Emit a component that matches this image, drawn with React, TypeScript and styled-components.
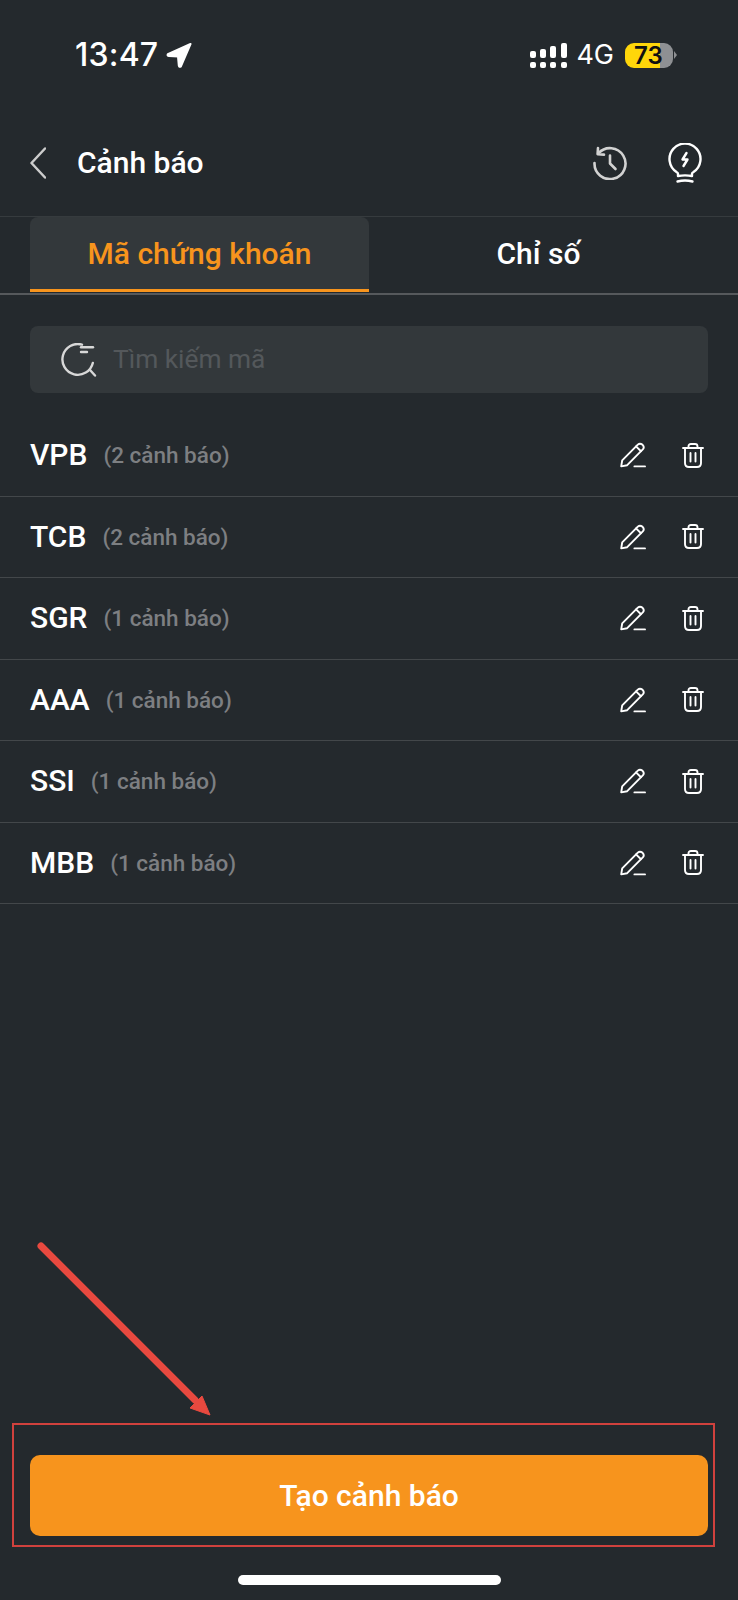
import React from "react";
import styled, { createGlobalStyle } from "styled-components";

const Global = createGlobalStyle`
  html, body { margin: 0; padding: 0; background: #24292d; }
  * { box-sizing: border-box; }
`;

const Page = styled.div`
  position: relative;
  width: 738px;
  height: 1600px;
  overflow: hidden;
  display: flex;
  flex-direction: column;
  background: #24292d;
  color: #fff;
  font-family: Roboto, "Liberation Sans", sans-serif;
`;

const StatusBar = styled.div`
  height: 110px;
  flex: none;
  display: flex;
  align-items: center;
  justify-content: space-between;
  padding: 0 61px 0 75px;
`;
const StatusGroup = styled.div<{ $gap: number }>`
  display: flex;
  align-items: center;
  gap: ${(p) => p.$gap}px;
`;
const Clock = styled.span`
  font-family: Inter, sans-serif;
  font-size: 32px;
  font-weight: 500;
  letter-spacing: 0.2px;
  line-height: 36px;
`;
const Network = styled.span`
  margin: 0 -1px 0 -3px;
  font-family: Inter, sans-serif;
  font-size: 27px;
  font-weight: 400;
  line-height: 32px;
`;
const Battery = styled.div`
  width: 48px;
  height: 25px;
  border-radius: 9px;
  background: linear-gradient(90deg, #ffd60a 0 73%, #8e9093 73% 100%);
  color: #111;
  font-family: Inter, sans-serif;
  font-size: 24px;
  font-weight: 600;
  line-height: 25px;
  padding-left: 9px;
`;
const BatteryCap = styled.div`
  width: 0;
  height: 0;
  margin-left: -11px;
  border-left: 3px solid #8e9093;
  border-top: 4px solid transparent;
  border-bottom: 4px solid transparent;
`;

const Header = styled.header`
  height: 106px;
  flex: none;
  display: flex;
  align-items: center;
  padding: 0 36px 0 30px;
`;
const Title = styled.h1`
  margin: 0 0 0 31px;
  flex: 1;
  font-size: 30px;
  font-weight: 500;
  line-height: 36px;
`;
const HeaderIcons = styled.div`
  display: flex;
  align-items: center;
  gap: 41px;
`;

const Tabs = styled.nav`
  flex: none;
  height: 79px;
  padding: 0 30px;
  display: grid;
  grid-template-columns: 339px 339px;
  border-top: 1px solid #363b3e;
  border-bottom: 2px solid #56595c;
`;
const Tab = styled.div<{ $active?: boolean }>`
  display: flex;
  align-items: center;
  justify-content: center;
  height: 75px;
  padding-bottom: 2px;
  border-radius: 8px 8px 0 0;
  font-size: 30px;
  font-weight: 500;
  background: ${(p) => (p.$active ? "#33383b" : "transparent")};
  color: ${(p) => (p.$active ? "#f7941d" : "#fff")};
  box-shadow: ${(p) => (p.$active ? "inset 0 -3px 0 #f7941d" : "none")};
`;

const Search = styled.div`
  flex: none;
  margin: 31px 30px 22px;
  height: 67px;
  border-radius: 8px;
  background: #33383b;
  display: flex;
  align-items: center;
  gap: 16px;
  padding-left: 31px;
`;
const Placeholder = styled.span`
  padding-bottom: 2px;
  font-size: 26.3px;
  color: #54585b;
`;

const List = styled.ul`
  list-style: none;
  margin: 0;
  padding: 0;
  flex: 1;
`;
const Row = styled.li`
  height: 81.5px;
  display: flex;
  align-items: center;
  padding: 0 34px 0 30px;
  border-bottom: 1px solid #43474a;
`;
const Code = styled.span`
  font-size: 30px;
  font-weight: 500;
  line-height: 36px;
`;
const Count = styled.span`
  flex: 1;
  margin-left: 16px;
  font-size: 22.5px;
  font-weight: 500;
  color: #7d7f82;
`;
const RowIcons = styled.div`
  display: flex;
  align-items: center;
  gap: 36px;
`;

const Footer = styled.footer`
  flex: none;
  height: 145px;
  padding: 0 30px;
  display: flex;
  flex-direction: column;
  align-items: center;
`;
const CreateButton = styled.button`
  width: 100%;
  height: 81px;
  flex: none;
  border: 0;
  border-radius: 10px;
  background: #f7941d;
  color: #fff;
  font-family: inherit;
  font-size: 30px;
  font-weight: 500;
`;
const HomeBar = styled.div`
  width: 263px;
  height: 10px;
  margin-top: 39px;
  flex: none;
  border-radius: 5px;
  background: #fff;
`;

const Highlight = styled.div`
  position: absolute;
  left: 12px;
  top: 1423px;
  width: 703px;
  height: 124px;
  border: 2px solid #d0413d;
  pointer-events: none;
`;
const ArrowSvg = styled.svg`
  position: absolute;
  left: 30px;
  top: 1235px;
`;

const Location = () => (
  <svg width="26" height="25" viewBox="0 0 26 25">
    <path d="M24.5 1 L1.8 11.2 Q1 12.8 3 13 L12 13.6 L12.8 22.6 Q13.2 24.4 14.8 23.6 Z" fill="#fff" stroke="#fff" strokeWidth="2" strokeLinejoin="round" />
  </svg>
);
const Signal = () => (
  <svg width="37" height="25" viewBox="0 0 37 25" fill="#fff">
    <rect x="0" y="8" width="6" height="7" rx="2" />
    <rect x="10" y="6" width="6" height="9" rx="2" />
    <rect x="20" y="3" width="6" height="12" rx="2" />
    <rect x="31" y="0" width="6" height="15" rx="2" />
    <rect x="0" y="19" width="6" height="6" rx="2" />
    <rect x="10" y="19" width="6" height="6" rx="2" />
    <rect x="20" y="19" width="6" height="6" rx="2" />
    <rect x="31" y="19" width="6" height="6" rx="2" />
  </svg>
);
const Back = () => (
  <svg width="16" height="32" viewBox="0 0 16 32" fill="none" stroke="#ccc" strokeWidth="2.5" strokeLinecap="round" strokeLinejoin="round">
    <path d="M15 1.5 L1.5 16 L15 30.5" />
  </svg>
);
const History = () => (
  <svg width="34" height="34" viewBox="0 0 34 34" fill="none" stroke="#d2d2d2" strokeWidth="2.6" strokeLinecap="round" strokeLinejoin="round">
    <path d="M5.5 7.2 A15.5 15.5 0 1 1 1.5 17" />
    <path d="M5 2 L4.6 8.2 L11 8.6" />
    <path d="M17 9.5 V17.5 L22.5 23" />
  </svg>
);
const Bulb = () => (
  <svg width="34" height="40" viewBox="0 0 34 40" fill="none" stroke="#fff" strokeWidth="2.4" strokeLinecap="round" strokeLinejoin="round">
    <path d="M10 33 V30.8 Q10 29.8 8.5 29 A15.5 15.5 0 1 1 25.5 29 Q24 29.8 24 30.8 V33 Q17 31.8 10 33 Z" />
    <path d="M9.5 38.5 Q17 36.5 24.5 38.5" />
    <path d="M18.5 10 L14.5 16.5 H19.5 L15.5 23" />
  </svg>
);
const SearchIcon = () => (
  <svg width="36" height="34" viewBox="0 0 36 34" fill="none" stroke="#d8d8d8" strokeWidth="2.4" strokeLinecap="round">
    <path d="M21 1.6 A15.4 15.4 0 1 0 31.8 20" />
    <path d="M20 4.2 H32" />
    <path d="M20 9 H26" />
    <path d="M29 27 L34 32.5" />
  </svg>
);
const Pen = () => (
  <svg width="26" height="26" viewBox="0 0 26 26" fill="none" stroke="#fff" strokeWidth="1.9" strokeLinecap="round" strokeLinejoin="round">
    <path d="M1.2 24.4 L2.2 18.4 L17.8 2.6 Q20 .6 22.6 2.8 Q24.8 5.2 22.8 7.4 L7.2 23.2 Z" />
    <path d="M16 4.4 L21 9.2" />
    <path d="M14.4 24.4 H25" />
  </svg>
);
const Trash = () => (
  <svg width="22" height="25" viewBox="0 0 22 25" fill="none" stroke="#fff" strokeWidth="1.9" strokeLinecap="round" strokeLinejoin="round">
    <path d="M1 5 H21" />
    <path d="M6.5 5 V3.4 Q6.5 1 9 1 H13 Q15.5 1 15.5 3.4 V5" />
    <path d="M3 5 V20 Q3 24 7 24 H15 Q19 24 19 20 V5" />
    <path d="M8.5 10 V18.5" />
    <path d="M13.5 10 V18.5" />
  </svg>
);

const rows = [
  ["VPB", "(2 cảnh báo)"],
  ["TCB", "(2 cảnh báo)"],
  ["SGR", "(1 cảnh báo)"],
  ["AAA", "(1 cảnh báo)"],
  ["SSI", "(1 cảnh báo)"],
  ["MBB", "(1 cảnh báo)"],
];

export default function App() {
  return (
    <Page>
      <Global />
      <StatusBar>
        <StatusGroup $gap={8}>
          <Clock>13:47</Clock>
          <Location />
        </StatusGroup>
        <StatusGroup $gap={12}>
          <Signal />
          <Network>4G</Network>
          <Battery>73</Battery>
          <BatteryCap />
        </StatusGroup>
      </StatusBar>
      <Header>
        <Back />
        <Title>Cảnh báo</Title>
        <HeaderIcons>
          <History />
          <Bulb />
        </HeaderIcons>
      </Header>
      <Tabs>
        <Tab $active>Mã chứng khoán</Tab>
        <Tab>Chỉ số</Tab>
      </Tabs>
      <Search>
        <SearchIcon />
        <Placeholder>Tìm kiếm mã</Placeholder>
      </Search>
      <List>
        {rows.map(([code, count]) => (
          <Row key={code}>
            <Code>{code}</Code>
            <Count>{count}</Count>
            <RowIcons>
              <Pen />
              <Trash />
            </RowIcons>
          </Row>
        ))}
      </List>
      <Footer>
        <CreateButton>Tạo cảnh báo</CreateButton>
        <HomeBar />
      </Footer>
      <Highlight />
      <ArrowSvg width="190" height="190" viewBox="0 0 190 190">
        <path d="M11 11 L165 165" stroke="#e8493f" strokeWidth="7" strokeLinecap="round" fill="none" />
        <path d="M180 180 L160 173 L172 161 Z" fill="#e8493f" stroke="#e8493f" strokeWidth="1" />
      </ArrowSvg>
    </Page>
  );
}
